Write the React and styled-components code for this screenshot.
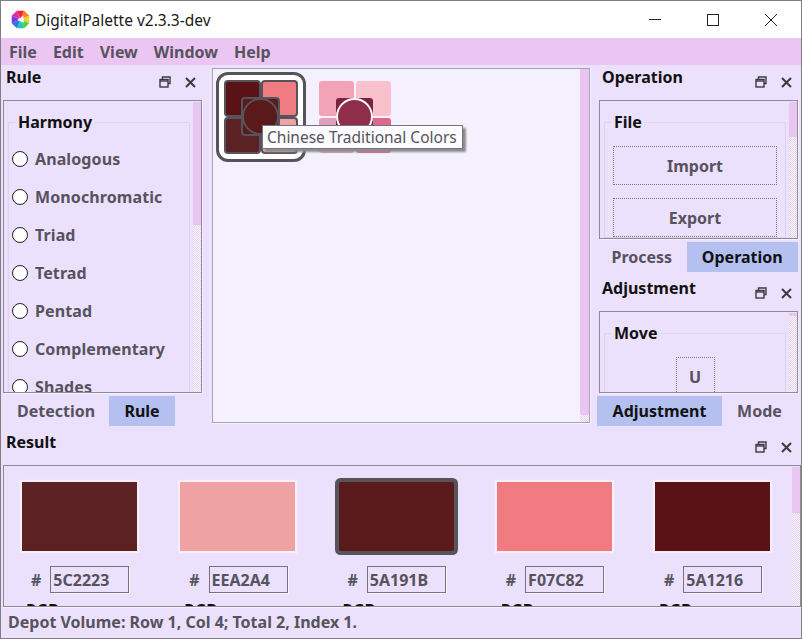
import React from 'react';
import styled, { createGlobalStyle } from 'styled-components';

const GlobalStyle = createGlobalStyle`
	html, body { margin: 0; padding: 0; background: #ebe1fc; }
	* { box-sizing: border-box; }
`;

const Win = styled.div`
	width: 802px;
	height: 639px;
	display: flex;
	flex-direction: column;
	overflow: hidden;
	border: 1px solid #7f7f7f;
	background: #ebe1fc;
	font-family: "Noto Sans", sans-serif;
	font-weight: 700;
	font-size: 16px;
	color: #57535e;
`;

const TitleBar = styled.div`
	height: 37px;
	flex: none;
	display: flex;
	align-items: center;
	background: #fff;
	padding: 0 1px 0 10px;
	color: #1a1a1a;
`;
const AppName = styled.span`
	font-weight: 400;
	font-size: 15.5px;
	margin-left: 5px;
	flex: 1;
`;
const WinBtn = styled.button`
	width: 58px;
	height: 37px;
	border: 0;
	padding: 0;
	background: none;
	display: flex;
	align-items: center;
	justify-content: center;
`;

const MenuBar = styled.div`
	height: 27px;
	flex: none;
	display: flex;
	align-items: center;
	gap: 16px;
	padding-left: 8px;
	background: #ecc6f2;
`;

const Main = styled.div`
	height: 361px;
	flex: none;
	display: flex;
	padding-left: 2px;
`;
const Col = styled.div`
	width: ${p => p.$w}px;
	flex: none;
	display: flex;
	flex-direction: column;
`;

const DockHead = styled.div`
	height: 35px;
	flex: none;
	display: flex;
	padding-left: ${p => p.$left || 3}px;
	padding-right: ${p => p.$right || 6}px;
	margin-top: ${p => p.$top || 0}px;
`;
const DockTitle = styled.span`
	flex: 1;
	color: #111;
	line-height: 24px;
`;
const DockIcons = styled.span`
	display: flex;
	gap: 14px;
	margin-top: 10px;
	height: 14px;
	align-items: center;
`;

const Panel = styled.div`
	height: ${p => p.$h}px;
	flex: none;
	display: flex;
	margin-left: ${p => p.$left || 0}px;
	overflow: hidden;
	border: 1px solid #8f8a97;
	box-shadow: 1px 1px 0 #f6f0ff;
`;
const PanelBody = styled.div`
	flex: 1;
	min-width: 0;
	overflow: hidden;
`;
const ScrollTrack = styled.div`
	width: 8px;
	flex: none;
	margin-top: 1px;
	display: flex;
	flex-direction: column;
	background: repeating-conic-gradient(#e6d2f0 0 25%, #fbf7ff 0 50%) 0 0 / 2px 2px;
`;
const ScrollThumb = styled.div`
	height: ${p => p.$h}px;
	flex: none;
	background: #e9c5f1;
`;

const Group = styled.fieldset`
	margin: 10px 3px 0 4px;
	padding: 7px 3px 0;
	border: 1px solid #ddd5ea;
	min-width: 0;
`;
const Legend = styled.legend`
	margin-left: 3px;
	padding: 0 3px;
	line-height: 22px;
	color: #111;
`;

const RadioRow = styled.div`
	height: 38px;
	display: flex;
	align-items: center;
	gap: 7px;
	letter-spacing: 0.1px;
`;
const RadioMark = styled.span`
	width: 16px;
	height: 16px;
	flex: none;
	border-radius: 50%;
	border: 1px solid #222;
	background: #fff;
`;

const ButtonStack = styled.div`
	display: flex;
	flex-direction: column;
	gap: 13px;
	padding-top: 6px;
`;
const DotButton = styled.div`
	width: ${p => p.$w || 164}px;
	height: 39px;
	flex: none;
	align-self: center;
	display: flex;
	align-items: center;
	justify-content: center;
	border: 1px dotted #77727f;
`;

const Tabs = styled.div`
	height: 30px;
	flex: none;
	margin-top: 3px;
	display: flex;
`;
const Tab = styled.div`
	width: ${p => p.$w}px;
	display: flex;
	align-items: center;
	justify-content: center;
	background: ${p => (p.$on ? '#b4c0f0' : 'transparent')};
	color: ${p => (p.$on ? '#111' : '#57535e')};
`;

const Depot = styled.div`
	width: 378px;
	height: 355px;
	flex: none;
	margin: 3px 7px 0 10px;
	display: flex;
	position: relative;
	background: #f5f0fe;
	border: 1px solid #a8a3b0;
	box-shadow: 1px 1px 0 #f8f3ff;
`;
const DepotGrid = styled.div`
	flex: 1;
	display: flex;
	align-items: flex-start;
	gap: 4px;
	padding: 3px;
`;
const DepotScroll = styled(ScrollTrack)`
	width: 9px;
	margin-top: 0;
`;
const PaletteCard = styled.div`
	width: 90px;
	height: 90px;
	flex: none;
	position: relative;
	display: grid;
	grid-template-columns: repeat(2, 35px);
	grid-template-rows: repeat(2, 35px);
	gap: 2px;
	align-content: center;
	justify-content: center;
	border-radius: 12px;
	border: 3px solid ${p => (p.$on ? '#57535a' : 'transparent')};
	background: ${p => (p.$on ? '#fff' : 'transparent')};
`;
const Quad = styled.div`
	border-radius: 3px;
	background: ${p => p.$c};
	outline: ${p => (p.$on ? '2px solid #57535a' : '0')};
	outline-offset: -1px;
`;
const CenterChip = styled.div`
	position: absolute;
	left: 23px;
	top: 23px;
	width: 37px;
	height: 37px;
	border-radius: 3px;
	background: ${p => p.$c};
	outline: ${p => (p.$on ? '2px solid #57535a' : '0')};
	outline-offset: -1px;
`;
const CenterDot = styled.div`
	position: absolute;
	inset: 0;
	border-radius: 50%;
	background: ${p => p.$c};
	border: 2px solid ${p => (p.$on ? '#57535a' : '#fff')};
`;
const Tip = styled.div`
	position: absolute;
	left: 49px;
	top: 56px;
	width: 201px;
	height: 24px;
	display: flex;
	align-items: center;
	padding-left: 4px;
	background: #fcfbfd;
	border: 1px solid #77727f;
	box-shadow: 3px 3px 2px #8c8c8c;
	font-weight: 400;
	font-size: 15.5px;
	color: #57535e;
	white-space: nowrap;
`;

const ResultGrid = styled.div`
	display: grid;
	grid-template-columns: repeat(5, 115px);
	column-gap: 43.25px;
	padding: 16px 0 0 18px;
`;
const Cell = styled.div`
	display: flex;
	flex-direction: column;
`;
const Swatch = styled.div`
	height: 69px;
	background: ${p => p.$c};
	border-radius: ${p => (p.$on ? '2px' : '0')};
	box-shadow: 0 0 ${p => (p.$on ? '0 4px #57535a' : '1px 2px #f8eff8')};
`;
const HexRow = styled.div`
	display: flex;
	align-items: center;
	margin-top: 15px;
	padding-left: 9px;
	gap: 9px;
`;
const HexField = styled.div`
	width: 79px;
	height: 27px;
	padding-left: 2px;
	line-height: 26px;
	border: 1px solid #77727f;
	box-shadow: 1px 1px 0 #f8f3ff;
`;
const ChannelLabel = styled.div`
	margin: 6px 0 0 4px;
	color: #111;
	line-height: 22px;
`;

const StatusBar = styled.div`
	height: 30px;
	flex: none;
	display: flex;
	align-items: center;
	padding-left: 7px;
`;

function FloatIcon() {
	return (
		<svg width="12" height="12" viewBox="0 0 12 12" fill="none" stroke="#3c3a40" strokeWidth="1.4">
			<path d="M3.5 3V1h7.5v6.5H9" />
			<rect x="1" y="3.5" width="8" height="7.5" />
			<path d="M1 5h8" />
		</svg>
	);
}

function CloseIcon() {
	return (
		<svg width="11" height="11" viewBox="0 0 11 11" fill="none" stroke="#3c3a40" strokeWidth="2">
			<path d="M1 1l9 9M10 1l-9 9" />
		</svg>
	);
}

function Logo() {
	const colors = ['#f0243c', '#f7812a', '#f8cf2a', '#4fd04a', '#22c8b8', '#2a78ea', '#7b36dc', '#e02ca8'];
	const wedges = colors.map((c, i) => {
		const a0 = (i / 8) * Math.PI * 2 - Math.PI / 2 - Math.PI / 8;
		const a1 = ((i + 1) / 8) * Math.PI * 2 - Math.PI / 2 - Math.PI / 8;
		return (
			<path
				key={c}
				fill={c}
				d={`M10 10L${10 + 10 * Math.cos(a0)} ${10 + 10 * Math.sin(a0)}L${10 + 10 * Math.cos(a1)} ${10 + 10 * Math.sin(a1)}Z`}
			/>
		);
	});
	return (
		<svg width="19" height="19" viewBox="0 0 20 20">
			{wedges}
			<path d="M13 6L13.5 13.5L6.5 10.5Z" fill="#fff" />
		</svg>
	);
}

function DockHeader({ title, left, right, top }) {
	return (
		<DockHead $left={left} $right={right} $top={top}>
			<DockTitle>{title}</DockTitle>
			<DockIcons>
				<FloatIcon />
				<CloseIcon />
			</DockIcons>
		</DockHead>
	);
}

const harmony = ['Analogous', 'Monochromatic', 'Triad', 'Tetrad', 'Pentad', 'Complementary', 'Shades'];

const palettes = [
	{ id: 'a', on: true, quads: ['#5a1216', '#f07c82', '#5c2223', '#eea2a4'], chip: '#5a191b' },
	{ id: 'b', quads: ['#f2a3b7', '#f9c0cd', '#e0a0b8', '#e0688c'], chip: '#7a2340', dot: '#8f2d4a' },
	{ id: 'c', quads: ['#f6f1fe', '#f6f1fe', '#f6f1fe', '#f6f1fe'], chip: '#f6f1fe', dot: '#f6f1fe', blank: true },
];

const results = [
	{ c: '#5c2223', hex: '5C2223' },
	{ c: '#eea2a4', hex: 'EEA2A4' },
	{ c: '#5a191b', hex: '5A191B', on: true },
	{ c: '#f07c82', hex: 'F07C82' },
	{ c: '#5a1216', hex: '5A1216' },
];

export default function App() {
	return (
		<Win>
			<GlobalStyle />
			<TitleBar>
				<Logo />
				<AppName>DigitalPalette v2.3.3-dev</AppName>
				<WinBtn>
					<svg width="14" height="14" viewBox="0 0 14 14" stroke="#222" fill="none"><path d="M1 6.5h12" /></svg>
				</WinBtn>
				<WinBtn>
					<svg width="14" height="14" viewBox="0 0 14 14" stroke="#222" fill="none"><rect x="1.5" y="1.5" width="11" height="11" /></svg>
				</WinBtn>
				<WinBtn>
					<svg width="14" height="14" viewBox="0 0 14 14" stroke="#222" fill="none"><path d="M1 1l12 12M13 1L1 13" /></svg>
				</WinBtn>
			</TitleBar>
			<MenuBar>
				<span>File</span>
				<span>Edit</span>
				<span>View</span>
				<span>Window</span>
				<span>Help</span>
			</MenuBar>
			<Main>
				<Col $w={199}>
					<DockHeader title="Rule" />
					<Panel $h={293}>
						<PanelBody>
							<Group>
								<Legend>Harmony</Legend>
								{harmony.map(h => (
									<RadioRow key={h}>
										<RadioMark />
										{h}
									</RadioRow>
								))}
							</Group>
						</PanelBody>
						<ScrollTrack><ScrollThumb $h={123} /></ScrollTrack>
					</Panel>
					<Tabs>
						<Tab $w={106}>Detection</Tab>
						<Tab $w={66} $on>Rule</Tab>
					</Tabs>
				</Col>
				<Depot>
					<DepotGrid>
						{palettes.map(p => (
							<PaletteCard key={p.id} $on={p.on}>
								{p.quads.map((q, i) => <Quad key={i} $c={q} $on={p.on} />)}
								<CenterChip $c={p.chip} $on={p.on}>
									{!p.blank && <CenterDot $c={p.dot || p.chip} $on={p.on} />}
								</CenterChip>
							</PaletteCard>
						))}
					</DepotGrid>
					<DepotScroll><ScrollThumb $h={346} /></DepotScroll>
					<Tip>Chinese Traditional Colors</Tip>
				</Depot>
				<Col $w={201}>
					<DockHeader title="Operation" left={5} />
					<Panel $h={139} $left={2}>
						<PanelBody>
							<Group>
								<Legend>File</Legend>
								<ButtonStack>
									<DotButton>Import</DotButton>
									<DotButton>Export</DotButton>
								</ButtonStack>
							</Group>
						</PanelBody>
						<ScrollTrack><ScrollThumb $h={35} /></ScrollTrack>
					</Panel>
					<Tabs>
						<Tab $w={90}>Process</Tab>
						<Tab $w={112} $on>Operation</Tab>
					</Tabs>
					<DockHeader title="Adjustment" left={5} top={4} />
					<Panel $h={82} $left={2}>
						<PanelBody>
							<Group>
								<Legend>Move</Legend>
								<ButtonStack>
									<DotButton $w={39}>U</DotButton>
								</ButtonStack>
							</Group>
						</PanelBody>
						<ScrollTrack><ScrollThumb $h={3} /></ScrollTrack>
					</Panel>
					<Tabs>
						<Tab $w={125} $on>Adjustment</Tab>
						<Tab $w={75}>Mode</Tab>
					</Tabs>
				</Col>
			</Main>
			<DockHeader title="Result" left={5} right={9} top={4} />
			<Panel $h={142} $left={2}>
				<PanelBody>
					<ResultGrid>
						{results.map(r => (
							<Cell key={r.hex}>
								<Swatch $c={r.c} $on={r.on} />
								<HexRow>
									#
									<HexField>{r.hex}</HexField>
								</HexRow>
								<ChannelLabel>RGB</ChannelLabel>
							</Cell>
						))}
					</ResultGrid>
				</PanelBody>
				<ScrollTrack><ScrollThumb $h={46} /></ScrollTrack>
			</Panel>
			<StatusBar>Depot Volume: Row 1, Col 4; Total 2, Index 1.</StatusBar>
		</Win>
	);
}
